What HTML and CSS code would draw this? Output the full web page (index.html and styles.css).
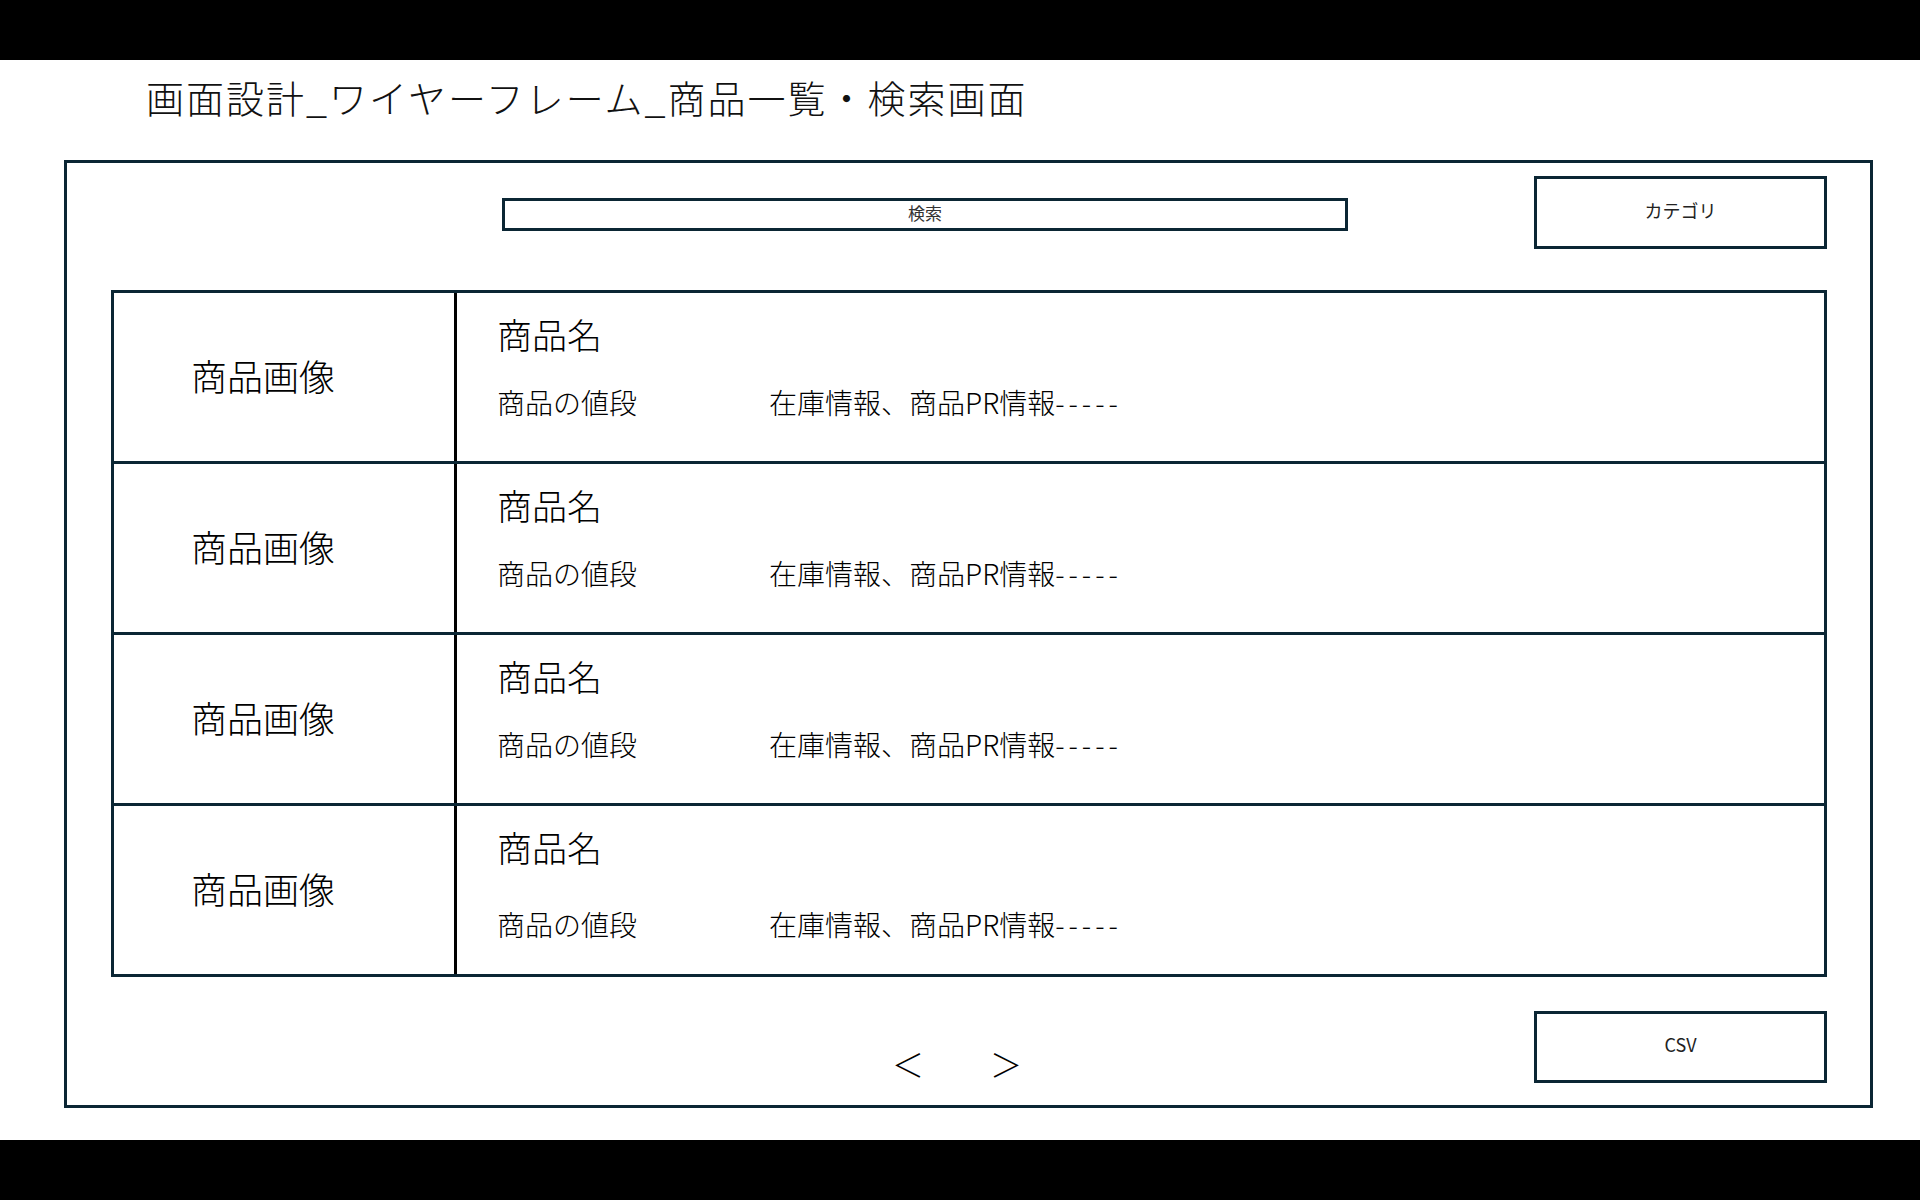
FILE: index.html
```html
<!DOCTYPE html>
<html lang="ja">
<head>
<meta charset="utf-8">
<title>画面設計_ワイヤーフレーム_商品一覧・検索画面</title>
<link rel="stylesheet" href="styles.css">
</head>
<body>
<div class="bar"></div>
<main class="stage">
  <h1 class="title">画面設計_ワイヤーフレーム_商品一覧・検索画面</h1>
  <section class="frame">
    <div class="header">
      <div class="search">検索</div>
      <div class="btn category">カテゴリ</div>
    </div>
    <div class="list">
      <div class="row">
        <div class="thumb">商品画像</div>
        <div class="info">
          <div class="name">商品名</div>
          <div class="meta"><span class="price">商品の値段</span><span class="desc">在庫情報、商品PR情報<span class="dash">-----</span></span></div>
        </div>
      </div>
      <div class="row">
        <div class="thumb">商品画像</div>
        <div class="info">
          <div class="name">商品名</div>
          <div class="meta"><span class="price">商品の値段</span><span class="desc">在庫情報、商品PR情報<span class="dash">-----</span></span></div>
        </div>
      </div>
      <div class="row">
        <div class="thumb">商品画像</div>
        <div class="info">
          <div class="name">商品名</div>
          <div class="meta"><span class="price">商品の値段</span><span class="desc">在庫情報、商品PR情報<span class="dash">-----</span></span></div>
        </div>
      </div>
      <div class="row">
        <div class="thumb">商品画像</div>
        <div class="info">
          <div class="name">商品名</div>
          <div class="meta"><span class="price">商品の値段</span><span class="desc">在庫情報、商品PR情報<span class="dash">-----</span></span></div>
        </div>
      </div>
    </div>
    <div class="footer">
      <div class="pager"><span class="pg">＜</span><span class="pg">＞</span></div>
      <div class="btn csv">CSV</div>
    </div>
  </section>
</main>
<div class="bar"></div>
</body>
</html>
```

FILE: styles.css
```css
html, body {
  margin: 0;
  padding: 0;
  background: #ffffff;
}

body {
  font-family: "Noto Sans CJK JP", "Noto Sans", sans-serif;
  font-weight: 300;
  color: #000000;
  width: 1920px;
  height: 1200px;
  overflow: hidden;
}

.bar {
  height: 60px;
  background: #000000;
}

.stage {
  height: 1080px;
  box-sizing: border-box;
  padding-top: 14px;
}

.title {
  margin: 0 0 40px 0;
  padding-left: 146px;
  height: 46px;
  font-size: 38px;
  line-height: 46px;
  font-weight: 300;
  letter-spacing: 2px;
  color: #111111;
  white-space: nowrap;
}

.frame {
  margin-left: 64px;
  width: 1809px;
  height: 948px;
  box-sizing: border-box;
  border: 3px solid #0b2634;
  display: flex;
  flex-direction: column;
  padding: 0 43px 0 44px;
}

.header {
  height: 127px;
  box-sizing: border-box;
  padding-top: 13px;
  display: flex;
  align-items: flex-start;
}

.search {
  margin-left: 391px;
  margin-top: 22px;
  width: 846px;
  height: 33px;
  box-sizing: border-box;
  border: 3px solid #0b2634;
  padding-bottom: 5px;
  display: flex;
  align-items: center;
  justify-content: center;
  font-size: 17px;
  font-weight: 400;
  color: #333333;
}

.btn {
  margin-left: auto;
  width: 293px;
  box-sizing: border-box;
  border: 3px solid #0b2634;
  display: flex;
  align-items: center;
  justify-content: center;
  font-size: 18px;
  font-weight: 400;
  color: #222222;
}

.category {
  height: 73px;
  padding-bottom: 6px;
}

.list {
  height: 687px;
  box-sizing: border-box;
  border: 3px solid #0b2634;
  display: flex;
  flex-direction: column;
}

.row {
  height: 168px;
  display: flex;
  flex: none;
}

.row + .row {
  border-top: 3px solid #0b2634;
}

.thumb {
  width: 343px;
  box-sizing: border-box;
  border-right: 3px solid #000000;
  padding-left: 77px;
  padding-bottom: 5px;
  display: flex;
  align-items: center;
  font-size: 36px;
}

.info {
  flex: 1;
  padding-left: 40px;
  padding-top: 20px;
}

.name {
  font-size: 35px;
  line-height: 42px;
}

.meta {
  margin-top: 30px;
  display: flex;
  font-size: 28px;
  line-height: 34px;
  white-space: nowrap;
}

.row:last-child .meta {
  margin-top: 39px;
}

.price {
  width: 272px;
}

.dash {
  letter-spacing: 4px;
}

.footer {
  height: 128px;
  box-sizing: border-box;
  padding-top: 34px;
  display: flex;
  align-items: flex-start;
}

.pager {
  margin-left: 781px;
  margin-top: 32px;
  display: flex;
  gap: 66px;
}

.pg {
  width: 32px;
  font-size: 32px;
  line-height: 40px;
  text-align: center;
}

.csv {
  height: 72px;
  padding-bottom: 6px;
}
```
